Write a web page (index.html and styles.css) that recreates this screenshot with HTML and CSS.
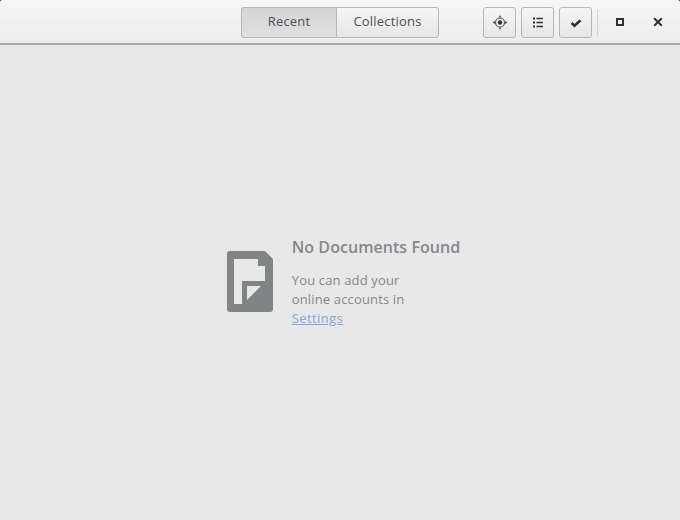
FILE: index.html
```html
<!DOCTYPE html>
<html lang="en">
<head>
<meta charset="utf-8">
<title>Documents</title>
<link rel="stylesheet" href="styles.css">
</head>
<body>
<div class="window">
  <header class="headerbar">
    <div class="switcher">
      <button class="seg seg-active">Recent</button>
      <button class="seg seg-last">Collections</button>
    </div>
    <div class="tools">
      <button class="tool" aria-label="Search">
        <svg width="16" height="16" viewBox="0 0 16 16"><circle cx="8" cy="7.500" r="4.500" fill="none" stroke="#555a5b" stroke-width="1.200"/><circle cx="8" cy="7.500" r="2.200" fill="#2e3436"/><path d="M8 0l1.400 2.500H6.600zM8 15l1.400-2.500H6.600zM.5 7.500L3 6.100v2.800zM15.500 7.500L13 6.100v2.800z" fill="#555a5b"/></svg>
      </button>
      <button class="tool" aria-label="List">
        <svg width="16" height="16" viewBox="0 0 16 16" fill="#2e3436"><path d="M3 2.500h2v2H3zM3 6.500h2v2H3zM3 10.500h2v2H3zM6.500 2.700H13v1.600H6.500zM6.500 6.700H13v1.600H6.500zM6.500 10.700H13v1.600H6.500z"/></svg>
      </button>
      <button class="tool" aria-label="Select">
        <svg width="16" height="16" viewBox="0 0 16 16"><path d="M3.500 8l3 2.700 6-5.500" fill="none" stroke="#2e3436" stroke-width="2.600"/></svg>
      </button>
    </div>
    <div class="sep"></div>
    <div class="wm">
      <button class="wm-btn" aria-label="Maximize"><span class="max-icon"></span></button>
      <button class="wm-btn" aria-label="Close">
        <svg class="close-icon" width="10" height="10" viewBox="0 0 10 10"><path d="M1.200 1.200l7.600 7.600M8.800 1.200L1.200 8.800" stroke="#2e3436" stroke-width="2"/></svg>
      </button>
    </div>
  </header>
  <main class="content">
    <div class="empty">
      <svg class="doc" width="46" height="61" viewBox="0 0 46 61">
        <path fill-rule="evenodd" fill="#7f8484" d="M3 0H37Q38 0 39 1L45 7Q46 8 46 9V58a3 3 0 0 1-3 3H3a3 3 0 0 1-3-3V3a3 3 0 0 1 3-3zM7 8V53H15V30H38V15H31V8zM20 35V49L34 35z"/>
      </svg>
      <div class="text">
        <h1 class="title">No Documents Found</h1>
        <p class="msg">You can add your<br>online accounts in<br><a class="link" href="#">Settings</a></p>
      </div>
    </div>
  </main>
</div>
</body>
</html>
```

FILE: styles.css
```css
* { box-sizing: border-box; }
html, body { margin: 0; height: 100%; background: #2b2b2b; }
body { font-family: "Open Sans", "Noto Sans", sans-serif; }
.window {
  width: 680px; height: 520px; display: flex; flex-direction: column;
  background: #e8e8e8; border-radius: 3px 3px 0 0; overflow: hidden;
}
.headerbar {
  height: 45px; flex: none; display: flex; align-items: flex-start;
  padding: 7px 0 0 241px;
  background: linear-gradient(#f7f7f7, #ececec);
  border-bottom: 2px solid #a9a9a9;
}
button { font: inherit; margin: 0; padding: 0 0 4px; cursor: pointer; }
.switcher { display: flex; width: 198px; height: 31px; }
.seg {
  height: 31px; font-size: 13px; letter-spacing: .2px; color: #4c5152;
  border: 1px solid #b6b6b3;
}
.seg-active {
  width: 95px; border-radius: 3px 0 0 3px; border-right: 0;
  background: linear-gradient(#d5d5d5, #e0e0e0);
}
.seg-last {
  width: 103px; border-radius: 0 3px 3px 0;
  background: linear-gradient(#f5f5f5, #e6e6e6);
}
.tools { display: flex; gap: 5px; margin-left: 44px; }
.tool {
  width: 33px; height: 31px; display: flex; align-items: center; justify-content: center;
  border: 1px solid #b6b6b3; border-radius: 3px;
  background: linear-gradient(#f5f5f5, #e6e6e6);
  padding: 0;
}
.sep { width: 1px; height: 27px; margin: 2px 0 0 5px; background: #d0d0d0; }
.wm { display: flex; margin-left: 3px; }
.wm-btn {
  width: 38px; height: 31px; display: flex; align-items: center; justify-content: center;
  border: 0; background: none; padding: 0;
}
.max-icon { width: 8px; height: 8px; border: 2px solid #2e3436; margin-top: -1px; }
.close-icon { margin-top: -1px; }
.content { flex: 1; display: flex; align-items: center; justify-content: center; padding: 0 0 2px 7px; }
.empty { display: flex; align-items: flex-start; gap: 19px; }
.doc { flex: none; margin-top: 15px; }
.title { margin: 0 0 13px; font-size: 16px; line-height: 22px; font-weight: 600; letter-spacing: .05px; color: #85898a; }
.msg { margin: 0; font-size: 13px; line-height: 19px; letter-spacing: .15px; color: #85898a; }
.link { color: #7fa8d6; letter-spacing: .4px; }
```
